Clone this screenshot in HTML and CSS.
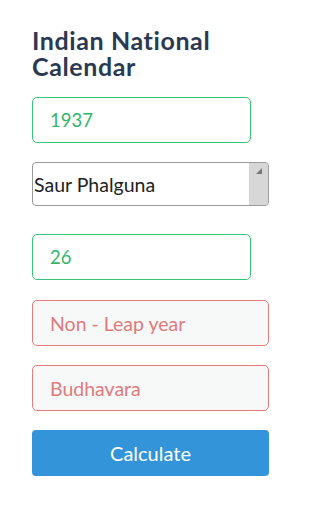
FILE: index.html
```html
<!DOCTYPE html>
<html>
<head>
<meta charset="utf-8">
<link rel="stylesheet" href="styles.css">
</head>
<body>
<main class="page">
  <h1 class="title">Indian National Calendar</h1>
  <div class="field field-ok field-short f1">1937</div>
  <div class="select">
    <span class="select-text">Saur Phalguna</span>
    <span class="scrollbar"><svg class="arrow" width="8" height="8" viewBox="0 0 8 8"><polygon points="7,1 7,7 1,7" fill="#777"/></svg></span>
  </div>
  <div class="field field-ok field-short f3">26</div>
  <div class="field field-bad f4">Non - Leap year</div>
  <div class="field field-bad f5">Budhavara</div>
  <button class="btn">Calculate</button>
</main>
</body>
</html>
```
FILE: styles.css
```css
html, body {
  margin: 0;
  padding: 0;
  background: #ffffff;
}
body {
  width: 288px;
  height: 512px;
  overflow: hidden;
  font-family: Lato, "Open Sans", sans-serif;
}
.page {
  display: flex;
  flex-direction: column;
  align-items: flex-start;
  padding: 27px 0 0 32px;
}
.title {
  margin: 0;
  font-size: 25px;
  line-height: 26px;
  font-weight: 700;
  letter-spacing: 0.6px;
  color: #2b3a52;
  width: 220px;
}
.field {
  box-sizing: border-box;
  height: 46px;
  border-radius: 5px;
  display: flex;
  align-items: center;
  padding-left: 17px;
  font-size: 18.5px;
}
.field-ok {
  border: 1px solid #36c677;
  color: #35b56c;
  background: #ffffff;
}
.field-short { width: 219px; }
.field-bad {
  width: 237px;
  border: 1px solid #e67b7b;
  color: #e07b7d;
  background: #f7f8f8;
  font-size: 19.5px;
}
.f1 { margin-top: 18px; }
.select {
  margin-top: 19px;
  box-sizing: border-box;
  width: 237px;
  height: 44px;
  border: 1px solid #9a9a9a;
  border-radius: 4px;
  display: flex;
  overflow: hidden;
  background: #fff;
}
.select-text {
  flex: 1;
  display: flex;
  align-items: center;
  padding-left: 1px;
  font-size: 19.5px;
  color: #222;
}
.scrollbar {
  width: 19px;
  background: #d7d7d7;
  display: flex;
  justify-content: center;
  align-items: flex-start;
  padding-top: 4px;
}
.f3 { margin-top: 28px; }
.f4 { margin-top: 20px; }
.f5 { margin-top: 19px; }
.btn {
  margin-top: 19px;
  width: 237px;
  height: 46px;
  border: none;
  border-radius: 4px;
  background: #3394d9;
  color: #ffffff;
  font-family: Lato, "Open Sans", sans-serif;
  font-size: 20px;
  padding: 0;
}
```
